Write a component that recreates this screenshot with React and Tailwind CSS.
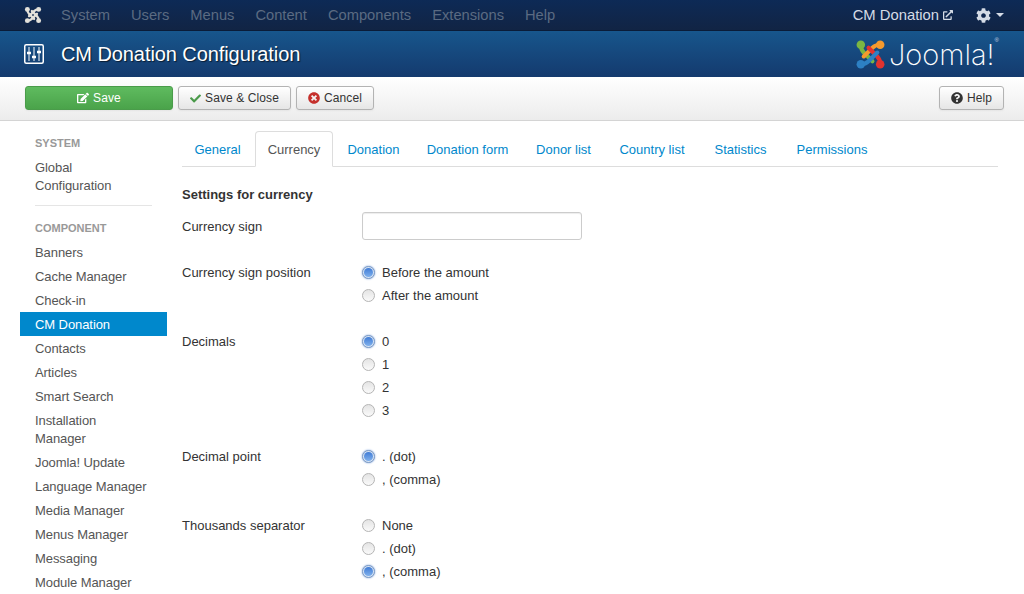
import React from 'react'
import { FaCheck, FaTimesCircle, FaQuestionCircle, FaCog, FaEdit, FaExternalLinkAlt } from 'react-icons/fa'

const navItems = ['System', 'Users', 'Menus', 'Content', 'Components', 'Extensions', 'Help']
const tabs = [
  { label: 'General', w: 'w-[71px]' },
  { label: 'Currency', w: 'w-[78px]' },
  { label: 'Donation', w: 'w-[77px]' },
  { label: 'Donation form', w: 'w-[107px]' },
  { label: 'Donor list', w: 'w-[81px]' },
  { label: 'Country list', w: 'w-[92px]' },
  { label: 'Statistics', w: 'w-[81px]' },
  { label: 'Permissions', w: 'w-[98px]' },
]
const sideItems = [
  'Banners', 'Cache Manager', 'Check-in', 'CM Donation', 'Contacts', 'Articles', 'Smart Search',
  'Installation Manager', 'Joomla! Update', 'Language Manager', 'Media Manager', 'Menus Manager',
  'Messaging', 'Module Manager',
]

function JoomlaMark({ size, colors }) {
  const arms = [
    { d: 'M6 6 Q6 11 9 14 L18 23', cx: 6, cy: 6 },
    { d: 'M26 6 Q21 6 18 9 L9 18', cx: 26, cy: 6 },
    { d: 'M26 26 Q26 21 23 18 L14 9', cx: 26, cy: 26 },
    { d: 'M6 26 Q11 26 14 23 L23 14', cx: 6, cy: 26 },
  ]
  return (
    <svg width={size} height={size} viewBox="0 0 32 32" fill="none" strokeWidth="4.2" strokeLinecap="round">
      {arms.map((a, i) => (
        <g key={i}>
          <path d={a.d} stroke={colors[i]} />
          <circle cx={a.cx} cy={a.cy} r="4.4" fill={colors[i]} />
        </g>
      ))}
    </svg>
  )
}

function SlidersIcon() {
  return (
    <svg width="20" height="20" viewBox="0 0 20 20" fill="none" stroke="white">
      <rect x="0.75" y="0.75" width="18.5" height="18.5" rx="1.5" strokeWidth="1.5" />
      <path d="M5 3v14M10 3v14M15 3v14" strokeWidth="1" />
      <path d="M3 9h4M8 13h4M13 8h4" strokeWidth="2.4" />
    </svg>
  )
}

function Radio({ checked }) {
  return (
    <span className={`w-[13px] h-[13px] rounded-full border flex items-center justify-center shrink-0 ${checked ? 'border-[#7f9cc4] bg-[#d5e3f5] shadow-[0_0_2px_#6d96d6]' : 'border-[#b5b5b5] bg-gradient-to-b from-[#e4e4e4] to-[#fafafa]'}`}>
      {checked && <span className="w-[9px] h-[9px] rounded-full bg-gradient-to-b from-[#3f7bd6] to-[#7fb0ec]" />}
    </span>
  )
}

function RadioRow({ label, options, checked, className }) {
  return (
    <div className={`flex ${className}`}>
      <label className="w-[180px] h-[23px] leading-[23px]">{label}</label>
      <div className="flex flex-col">
        {options.map((o, i) => (
          <div key={o} className="h-[23px] flex items-center gap-[7px]">
            <Radio checked={i === checked} />
            <span>{o}</span>
          </div>
        ))}
      </div>
    </div>
  )
}

function ToolButton({ icon, children, className }) {
  return (
    <button className={`h-[24px] rounded-[3px] border text-[12px] tracking-[0.1px] flex items-center justify-center gap-[4px] shadow-[0_1px_2px_rgba(0,0,0,0.05)] ${className}`}>
      {icon}
      {children}
    </button>
  )
}

const plainButton = 'border-[#b3b3b3] bg-gradient-to-b from-white to-[#e6e6e6] text-[#333]'

export default function App() {
  return (
    <div className="h-[594px] overflow-hidden bg-white text-[#333] text-[13px] leading-[18px] font-['Liberation_Sans',Arial,sans-serif]">
      {/* top nav */}
      <div className="h-[31px] bg-gradient-to-b from-[#0d2a56] to-[#112444] border-b border-[#0a1c38] flex items-center">
        <div className="w-[61px] pl-[24px] flex items-center">
          <JoomlaMark size={18} colors={['#e3e1da', '#e3e1da', '#e3e1da', '#e3e1da']} />
        </div>
        <div className="flex gap-[21px] text-[14.7px] text-[#5b6b82]">
          {navItems.map(n => <span key={n}>{n}</span>)}
        </div>
        <div className="ml-auto flex items-center text-[14.8px] text-[#d5dce6] pr-[20px]">
          <span>CM Donation</span>
          <FaExternalLinkAlt className="ml-[4px] text-[10px]" />
          <FaCog className="ml-[23px] text-[15px]" />
          <span className="ml-[5px] w-0 h-0 border-x-[4.5px] border-x-transparent border-t-[4.5px] border-t-[#d5dce6]" />
        </div>
      </div>

      {/* header */}
      <div className="h-[46px] bg-gradient-to-b from-[#17568c] to-[#143a6e] flex items-center pl-[24px] pr-[25px]">
        <SlidersIcon />
        <h1 className="ml-[17px] text-[20px] tracking-[-0.08px] font-normal text-white [text-shadow:1px_1px_1px_rgba(0,0,0,0.6)]">CM Donation Configuration</h1>
        <div className="ml-auto flex items-center">
          <JoomlaMark size={31} colors={['#7ab642', '#f59a2d', '#e2332f', '#2d80c4']} />
          <span className="ml-[3px] text-[29px] leading-none text-white font-['Inter',sans-serif] font-extralight">Joomla!</span>
          <span className="self-start mt-[-2px] text-[6px] leading-none text-[#cfd8e4]">®</span>
        </div>
      </div>

      {/* toolbar */}
      <div className="h-[44px] pb-[1px] bg-gradient-to-b from-white to-[#ececec] border-b border-[#d4d4d4] flex items-center pl-[25px] pr-[20px] gap-[5px]">
        <ToolButton
          className="w-[148px] border-[#4a9c4a] bg-gradient-to-b from-[#5fbb5f] to-[#4aa34a] text-white"
          icon={<FaEdit className="text-[12px]" />}
        >
          Save
        </ToolButton>
        <ToolButton className={`w-[113px] ${plainButton}`} icon={<FaCheck className="text-[11px] text-[#4a9a4a]" />}>Save &amp; Close</ToolButton>
        <ToolButton className={`w-[78px] ${plainButton}`} icon={<FaTimesCircle className="text-[12px] text-[#c5302c]" />}>Cancel</ToolButton>
        <ToolButton className={`w-[65px] ml-auto ${plainButton}`} icon={<FaQuestionCircle className="text-[12px] text-[#333]" />}>Help</ToolButton>
      </div>

      <div className="flex pl-[20px] pr-[26px]">
        {/* sidebar */}
        <div className="w-[147px] shrink-0 pt-[13px] tracking-[-0.08px]">
          <div className="pl-[15px] h-[18px] text-[11px] font-bold text-[#999] uppercase tracking-normal">System</div>
          <div className="pl-[15px] pr-[15px] pt-[4px] pb-[2px] mt-[3px] text-[#555] w-[120px]">Global Configuration</div>
          <div className="ml-[15px] mr-[15px] mt-[8px] mb-[13px] border-t border-[#e5e5e5]" />
          <div className="pl-[15px] h-[18px] text-[11px] font-bold text-[#999] uppercase tracking-normal">Component</div>
          <div className="mt-[3px]">
            {sideItems.map(s => (
              <div key={s} className={`pl-[15px] pt-[4px] pb-[2px] ${s === 'CM Donation' ? 'bg-[#0088cc] text-white' : 'text-[#555]'} ${s === 'Installation Manager' ? 'w-[110px]' : ''}`}>
                {s}
              </div>
            ))}
          </div>
        </div>

        {/* content */}
        <div className="ml-[15px] flex-1 pt-[10px]">
          <div className="flex h-[36px] border-b border-[#ddd]">
            {tabs.map(t => (
              <div
                key={t.label}
                className={`${t.w} mr-[2px] h-[36px] leading-[36px] text-center border rounded-t-[4px] ${t.label === 'Currency' ? 'border-[#ddd] border-b-white bg-white text-[#555]' : 'border-transparent text-[#0088cc]'}`}
              >
                {t.label}
              </div>
            ))}
          </div>

          <div className="mt-[19px] font-bold h-[18px]">Settings for currency</div>

          <div className="flex mt-[8px]">
            <label className="w-[180px] h-[28px] leading-[30px]">Currency sign</label>
            <input className="w-[220px] h-[28px] rounded-[3px] border border-[#ccc] bg-white shadow-[inset_0_1px_1px_rgba(0,0,0,0.075)]" />
          </div>

          <RadioRow className="mt-[21px]" label="Currency sign position" options={['Before the amount', 'After the amount']} checked={0} />
          <RadioRow className="mt-[23px]" label="Decimals" options={['0', '1', '2', '3']} checked={0} />
          <RadioRow className="mt-[23px]" label="Decimal point" options={['. (dot)', ', (comma)']} checked={0} />
          <RadioRow className="mt-[23px]" label="Thousands separator" options={['None', '. (dot)', ', (comma)']} checked={2} />
        </div>
      </div>
    </div>
  )
}
